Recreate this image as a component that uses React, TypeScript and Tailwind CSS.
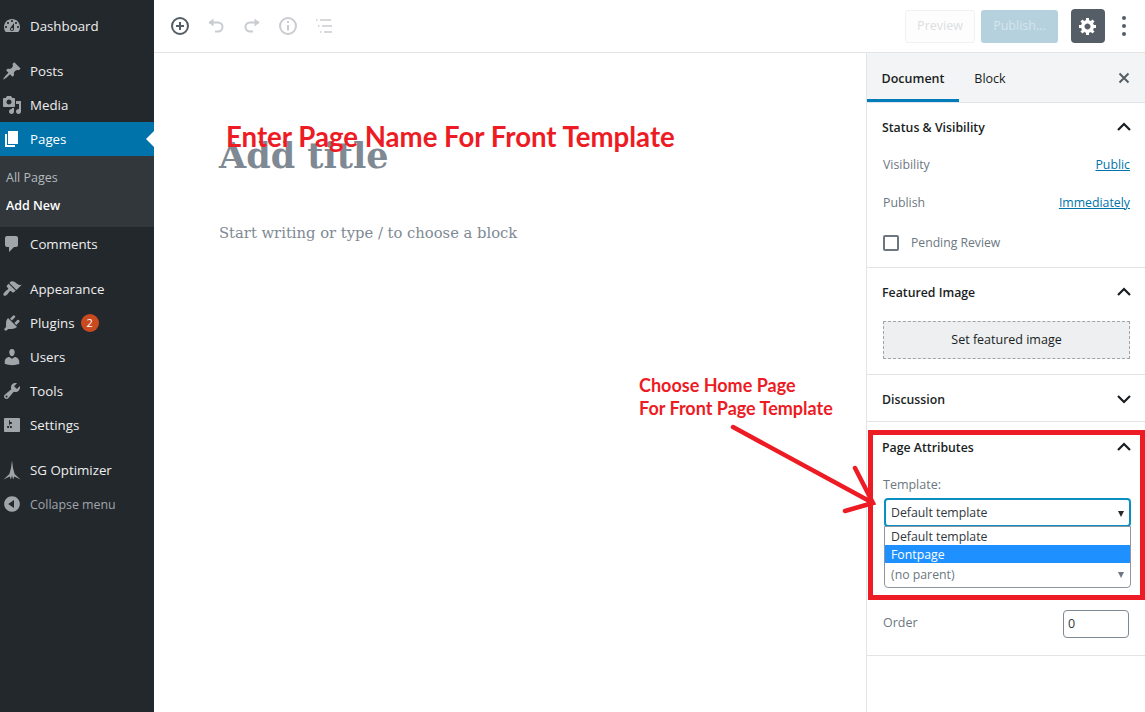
import { ReactNode } from "react";

const icons: Record<string, string> = {
  dashboard:
    "M3.76 16h12.48c1.1-1.37 1.76-3.11 1.76-5 0-4.42-3.58-8-8-8s-8 3.58-8 8c0 1.89.66 3.63 1.76 5zM10 4c.55 0 1 .45 1 1s-.45 1-1 1-1-.45-1-1 .45-1 1-1zM6 6c.55 0 1 .45 1 1s-.45 1-1 1-1-.45-1-1 .45-1 1-1zm8 0c.55 0 1 .45 1 1s-.45 1-1 1-1-.45-1-1 .45-1 1-1zm-5.37 5.55L12 7v6c0 1.1-.9 2-2 2s-2-.9-2-2c0-.57.24-1.08.63-1.45zM4 10c.55 0 1 .45 1 1s-.45 1-1 1-1-.45-1-1 .45-1 1-1zm12 0c.55 0 1 .45 1 1s-.45 1-1 1-1-.45-1-1 .45-1 1-1zm-5 3c0-.55-.45-1-1-1s-1 .45-1 1 .45 1 1 1 1-.45 1-1z",
  post: "M10.44 3.02l1.82-1.82 6.36 6.35-1.83 1.82c-1.05-.68-2.48-.57-3.41.36l-.75.75c-.92.93-1.04 2.35-.35 3.41l-1.83 1.82-2.41-2.41-2.8 2.79c-.42.42-3.38 2.71-3.8 2.29s1.86-3.39 2.28-3.81l2.79-2.79L4.1 9.36l1.83-1.82c1.05.69 2.48.57 3.4-.36l.75-.75c.93-.92 1.05-2.35.36-3.41z",
  media:
    "M13 11V4c0-.55-.45-1-1-1h-1.67L9 1H5L3.67 3H2c-.55 0-1 .45-1 1v7c0 .55.45 1 1 1h10c.55 0 1-.45 1-1zM7 4.5c1.38 0 2.5 1.12 2.5 2.5S8.38 9.5 7 9.5 4.5 8.38 4.5 7 5.62 4.5 7 4.5zM14 6h5v10.5c0 1.38-1.12 2.5-2.5 2.5S14 17.88 14 16.5s1.12-2.5 2.5-2.5c.17 0 .34.02.5.05V9h-3V6zm-4 8.05V13h2v3.5c0 1.38-1.12 2.5-2.5 2.5S7 17.88 7 16.5 8.12 14 9.5 14c.17 0 .34.02.5.05z",
  page: "M6 15V2h10v13H6zm-1 1h8v2H3V5h2v11z",
  comments:
    "M5 2h9c1.1 0 2 .9 2 2v7c0 1.1-.9 2-2 2h-2l-5 5v-5H5c-1.1 0-2-.9-2-2V4c0-1.1.9-2 2-2z",
  appearance:
    "M14.48 11.06L7.41 3.99l1.5-1.5c.5-.56 2.3-.47 3.51.32 1.21.8 1.43 1.28 2.91 2.1 1.18.64 2.45 1.26 4.45.85zm-.71.71L6.7 4.7 4.93 6.47c-.39.39-.39 1.02 0 1.41l1.06 1.06c.39.39.39 1.03 0 1.42-.6.6-1.43 1.11-2.21 1.69-.35.26-.7.53-1.01.84-1.34 1.34-1.86 2.73-1.05 3.54.81.81 2.2.29 3.54-1.05.31-.31.58-.65.84-1 .58-.78 1.09-1.61 1.69-2.21.39-.39 1.02-.39 1.41 0l1.06 1.06c.39.39 1.02.39 1.41 0z",
  plugins:
    "M13.11 4.36L9.87 7.6 8 5.73l3.24-3.24c.35-.34 1.05-.2 1.56.32.52.51.66 1.21.31 1.55zm-8 1.77l.91-1.12 9.01 9.01-1.19.84c-.71.71-2.63 1.16-3.82 1.16H6.14L4.9 17.26c-.59.59-1.54.59-2.12 0-.59-.58-.59-1.53 0-2.12l1.24-1.24v-3.88c0-1.13.4-3.19 1.09-3.89zm7.26 3.97l3.24-3.24c.34-.35 1.04-.21 1.55.31.52.51.66 1.21.31 1.55l-3.24 3.25z",
  users:
    "M10 9.25c-2.27 0-2.73-3.44-2.73-3.44C7 4.02 7.82 2 9.97 2c2.16 0 2.98 2.02 2.71 3.81 0 0-.41 3.44-2.68 3.44zm0 2.57L12.72 10c2.39 0 4.52 2.33 4.52 4.53v2.49s-3.65 1.13-7.24 1.13c-3.65 0-7.24-1.13-7.24-1.13v-2.49c0-2.25 1.94-4.48 4.47-4.48z",
  tools:
    "M16.68 9.77c-1.34 1.34-3.3 1.67-4.95.99l-5.41 6.52c-.99.99-2.59.99-3.58 0s-.99-2.59 0-3.57l6.52-5.42c-.68-1.65-.35-3.61.99-4.95 1.28-1.28 3.12-1.62 4.72-1.06l-2.89 2.89 2.82 2.82 2.86-2.87c.53 1.58.18 3.39-1.08 4.65zM3.81 16.21c.4.39 1.04.39 1.43 0 .4-.4.4-1.04 0-1.43-.39-.4-1.03-.4-1.43 0-.39.39-.39 1.03 0 1.43z",
  settings:
    "M18 16V4c0-.55-.45-1-1-1H3c-.55 0-1 .45-1 1v12c0 .55.45 1 1 1h14c.55 0 1-.45 1-1zM8 11h1c.55 0 1 .45 1 1s-.45 1-1 1H8v1.5c0 .28-.22.5-.5.5s-.5-.22-.5-.5V13H6c-.55 0-1-.45-1-1s.45-1 1-1h1V5.5c0-.28.22-.5.5-.5s.5.22.5.5V7h1c.55 0 1 .45 1 1s-.45 1-1 1h-1v5.5c0 .28-.22.5-.5.5s-.5-.22-.5-.5V9z",
  sg: "M10 0.5L11 8l1.6 6L18.5 19.5l-6.3-3L11.2 19.5 10 15.5 8.8 19.5l-1-3-6.3 3L7.4 14 9 8z",
  collapse:
    "M10 2.16c4.33 0 7.84 3.51 7.84 7.84s-3.51 7.84-7.84 7.84S2.16 14.33 2.16 10 5.71 2.16 10 2.16zm2 11.72V6.12L6.18 9.97z",
};

const gear =
  "M18 12h-2.18c-.17.7-.44 1.35-.81 1.93l1.54 1.54-2.1 2.1-1.54-1.54c-.58.36-1.23.63-1.91.79V19H8v-2.18c-.68-.16-1.33-.43-1.91-.79l-1.54 1.54-2.12-2.12 1.54-1.54c-.36-.58-.63-1.23-.79-1.91H1V9.03h2.17c.16-.7.44-1.35.8-1.94L2.43 5.55l2.1-2.1 1.54 1.54c.58-.37 1.24-.64 1.93-.81V2h3v2.18c.68.16 1.33.43 1.91.79l1.54-1.54 2.12 2.12-1.54 1.54c.36.59.64 1.24.8 1.94H18V12zm-8.5 1.5c1.66 0 3-1.34 3-3s-1.34-3-3-3-3 1.34-3 3 1.34 3 3 3z";

function MenuItem({
  icon,
  label,
  active,
  muted,
  badge,
}: {
  icon: string;
  label: string;
  active?: boolean;
  muted?: boolean;
  badge?: string;
}) {
  return (
    <div
      className={`relative flex h-[34px] items-center ${
        active ? "bg-[#0073aa] text-white" : muted ? "text-[#a0a5aa]" : "text-[#eeeeee]"
      }`}
    >
      <svg
        viewBox="0 0 20 20"
        className={`ml-[2px] h-5 w-5 shrink-0 ${active ? "fill-white" : "fill-[#a0a5aa]"}`}
      >
        <path d={icons[icon]} />
      </svg>
      <span className={`ml-2 mt-[2px] ${muted ? "text-[12.4px]" : "text-[13.3px]"}`}>{label}</span>
      {badge && (
        <span className="ml-[6px] flex h-[18px] w-[18px] items-center justify-center rounded-full bg-[#ca4a1f] text-[11px] text-white">
          {badge}
        </span>
      )}
      {active && (
        <span className="absolute right-0 top-[9px] h-0 w-0 border-y-[8px] border-r-[8px] border-y-transparent border-r-white" />
      )}
    </div>
  );
}

function Chevron({ up }: { up?: boolean }) {
  return (
    <svg viewBox="0 0 24 24" className="h-6 w-6 fill-none stroke-[#191e23] stroke-[2.2]">
      <path d={up ? "M6 15l6-6 6 6" : "M6 9l6 6 6-6"} />
    </svg>
  );
}

function PanelTitle({ title, up }: { title: string; up?: boolean }) {
  return (
    <div className="flex items-center justify-between pr-[9px] text-[12.3px] font-semibold text-[#191e23]">
      <span className="mt-[2px]">{title}</span>
      <Chevron up={up} />
    </div>
  );
}

function Row({ label, children }: { label: string; children: ReactNode }) {
  return (
    <div className="flex h-[38px] items-center justify-between pl-px pr-[15px] pt-[2px] text-[12.3px] text-[#6c7781]">
      <span>{label}</span>
      {children}
    </div>
  );
}

export default function App() {
  return (
    <div className="relative flex h-[712px] w-[1145px] overflow-hidden bg-white font-['Open_Sans',sans-serif]">
      <aside className="w-[154px] shrink-0 bg-[#23282d] pt-[9px]">
        <MenuItem icon="dashboard" label="Dashboard" />
        <div className="h-[11px]" />
        <MenuItem icon="post" label="Posts" />
        <MenuItem icon="media" label="Media" />
        <MenuItem icon="page" label="Pages" active />
        <div className="flex h-[71px] flex-col bg-[#32373c] pl-[6px] pt-[8px] text-[12.5px]">
          <div className="flex h-7 items-center text-[#b4b9be]">All Pages</div>
          <div className="flex h-7 items-center font-semibold text-white">Add New</div>
        </div>
        <MenuItem icon="comments" label="Comments" />
        <div className="h-[11px]" />
        <MenuItem icon="appearance" label="Appearance" />
        <MenuItem icon="plugins" label="Plugins" badge="2" />
        <MenuItem icon="users" label="Users" />
        <MenuItem icon="tools" label="Tools" />
        <MenuItem icon="settings" label="Settings" />
        <div className="h-[11px]" />
        <MenuItem icon="sg" label="SG Optimizer" />
        <MenuItem icon="collapse" label="Collapse menu" muted />
      </aside>

      <div className="flex min-w-0 flex-1 flex-col">
        <header className="flex h-[53px] shrink-0 items-center justify-between border-b border-[#e2e4e7] pl-[14px] pr-[19px]">
          <div className="flex items-center gap-[12px]">
            <svg viewBox="0 0 24 24" className="h-6 w-6 fill-none stroke-[#555d66] stroke-2">
              <circle cx="12" cy="12" r="8" />
              <path d="M12 8v8M8 12h8" />
            </svg>
            <svg viewBox="0 0 24 24" className="h-6 w-6 fill-none stroke-[#c9ccd0] stroke-2">
              <path d="M5 8.5h9a4.5 4.5 0 0 1 0 9h-3" />
              <path d="M9.5 4.5l-5 4 5 4" className="fill-[#c9ccd0] stroke-none" />
            </svg>
            <svg viewBox="0 0 24 24" className="h-6 w-6 fill-none stroke-[#c9ccd0] stroke-2">
              <path d="M19 8.5h-9a4.5 4.5 0 0 0 0 9h3" />
              <path d="M14.5 4.5l5 4-5 4" className="fill-[#c9ccd0] stroke-none" />
            </svg>
            <svg viewBox="0 0 24 24" className="h-6 w-6 fill-none stroke-[#c9ccd0] stroke-2">
              <circle cx="12" cy="12" r="8" />
              <path d="M12 11v5.5M12 7v2" />
            </svg>
            <svg viewBox="0 0 24 24" className="h-6 w-6 fill-none stroke-[#c9ccd0] stroke-[1.6]">
              <path d="M4 6h1.5M8 6h11M6 12h1.5M10 12h10M8 18h1.5M12 18h8" />
            </svg>
          </div>
          <div className="flex items-center">
            <button className="flex h-[33px] w-[70px] items-center justify-center rounded-[3px] border border-[#f0f1f2] bg-[#fdfdfd] text-[12.5px] text-[#dcdfe1]">
              Preview
            </button>
            <button className="ml-[6px] flex h-[33px] w-[77px] items-center justify-center rounded-[3px] bg-[#b5d1dd] text-[12.5px] text-[#d5e5ec]">
              Publish...
            </button>
            <div className="ml-[13px] flex h-[34px] w-[34px] items-center justify-center rounded-[4px] bg-[#555d66]">
              <svg viewBox="0 0 20 20" className="h-5 w-5 fill-white">
                <path d={gear} />
              </svg>
            </div>
            <div className="ml-[17px] flex flex-col gap-[4px]">
              <span className="h-1 w-1 rounded-full bg-[#555d66]" />
              <span className="h-1 w-1 rounded-full bg-[#555d66]" />
              <span className="h-1 w-1 rounded-full bg-[#555d66]" />
            </div>
          </div>
        </header>

        <div className="flex min-h-0 flex-1">
          <main className="min-w-0 flex-1 pl-[65px] pt-[76px] font-['DejaVu_Serif',serif]">
            <h1 className="h-[54px] text-[35px] font-bold leading-[54px] text-[#7e8993]">Add title</h1>
            <p className="mt-[38px] text-[14.75px] leading-6 text-[#7e8993]">
              Start writing or type / to choose a block
            </p>
          </main>

          <aside className="w-[279px] shrink-0 border-l border-[#e2e4e7]">
            <div className="flex h-[50px] items-stretch justify-between border-b border-[#e2e4e7] bg-[#f3f4f5] pr-[9px] text-[12.5px] text-[#191e23]">
              <div className="flex">
                <div className="flex w-[92px] items-center justify-center border-b-[3px] border-[#007cba] pt-[7px] font-semibold">
                  Document
                </div>
                <div className="flex w-[62px] items-center justify-center pt-[3px]">Block</div>
              </div>
              <svg viewBox="0 0 24 24" className="mt-[13px] h-6 w-6 fill-none stroke-[#555d66] stroke-2">
                <path d="M7.5 7.5l9 9M16.5 7.5l-9 9" />
              </svg>
            </div>

            <section className="h-[165px] border-b border-[#e2e4e7] pl-[15px] pt-[12px]">
              <PanelTitle title="Status & Visibility" up />
              <div className="mt-[6px]">
                <Row label="Visibility">
                  <a className="text-[#0073aa] underline">Public</a>
                </Row>
                <Row label="Publish">
                  <a className="text-[#0073aa] underline">Immediately</a>
                </Row>
              </div>
              <div className="mt-[13px] flex items-center pl-px text-[12.2px] text-[#6c7781]">
                <span className="h-4 w-4 rounded-[2px] border-2 border-[#6c7781]" />
                <span className="ml-3">Pending Review</span>
              </div>
            </section>

            <section className="h-[107px] border-b border-[#e2e4e7] pl-[15px] pt-[12px]">
              <PanelTitle title="Featured Image" up />
              <div className="ml-px mr-[15px] mt-[17px] flex h-[38px] items-center justify-center border border-dashed border-[#a0a5aa] bg-[#edeff0] text-[12.5px] text-[#191e23]">
                Set featured image
              </div>
            </section>

            <section className="h-[47px] border-b border-[#e2e4e7] pl-[15px] pt-[12px]">
              <PanelTitle title="Discussion" />
            </section>

            <section className="relative h-[234px] border-b border-[#e2e4e7] pl-[15px] pt-[13px]">
              <PanelTitle title="Page Attributes" up />
              <div className="ml-px mt-[17px] text-[12.5px] leading-[18px] text-[#6c7781]">Template:</div>
              <div className="relative ml-[2px] mr-[14px] mt-[4px]">
                <div className="flex h-[29px] items-center justify-between rounded-[4px] border-2 border-[#0a8fc0] pl-[5px] pr-[5px] pt-[2px] text-[12.3px] text-[#32373c]">
                  <span>Default template</span>
                  <span className="h-0 w-0 border-x-[3.5px] border-t-[6px] border-x-transparent border-t-[#23282d]" />
                </div>
                <div className="absolute inset-x-0 top-[28px] h-[62px] rounded-b-[4px] border border-[#8d96a0] bg-white text-[12.3px] text-[#32373c]">
                  <div className="flex h-[18px] items-center pl-[6px] pt-[2px]">Default template</div>
                  <div className="flex h-[18px] items-center bg-[#1e90ff] pl-[6px] pt-[2px] text-white">Fontpage</div>
                  <div className="flex h-[24px] items-center justify-between pl-[6px] pr-[6px] text-[#6c7781]">
                    <span>(no parent)</span>
                    <span className="h-0 w-0 border-x-[3.5px] border-t-[6px] border-x-transparent border-t-[#6c7781]" />
                  </div>
                </div>
              </div>
              <div className="absolute inset-x-0 top-[188px] flex items-start justify-between pl-[16px] pr-[16px] text-[12.5px] text-[#6c7781]">
                <span className="mt-[4px]">Order</span>
                <div className="flex h-[28px] w-[66px] items-center rounded-[4px] border border-[#7e8993] pl-[4px] text-[#32373c]">
                  0
                </div>
              </div>
            </section>
          </aside>
        </div>
      </div>

      {/* annotations drawn on top of the screenshot */}
      <div className="absolute left-[868px] top-[430px] h-[170px] w-[277px] border-[5px] border-[#ed1c24]" />
      <div className="absolute left-[226px] top-[120px] font-['Lato',sans-serif] text-[27.6px] font-bold leading-[34px] text-[#ed1c24]">
        Enter Page Name For Front Template
      </div>
      <div className="absolute left-[639px] top-[374px] font-['Lato',sans-serif] text-[18px] font-bold leading-[23px] text-[#ed1c24]">
        Choose Home Page
        <br />
        For Front Page Template
      </div>
      <svg viewBox="0 0 160 100" className="absolute left-[725px] top-[420px] h-[100px] w-[160px] fill-none stroke-[#ed1c24] stroke-[4.5]">
        <path d="M8 7L148 83M130 48L148 83L120 91" strokeLinecap="round" />
      </svg>
    </div>
  );
}
